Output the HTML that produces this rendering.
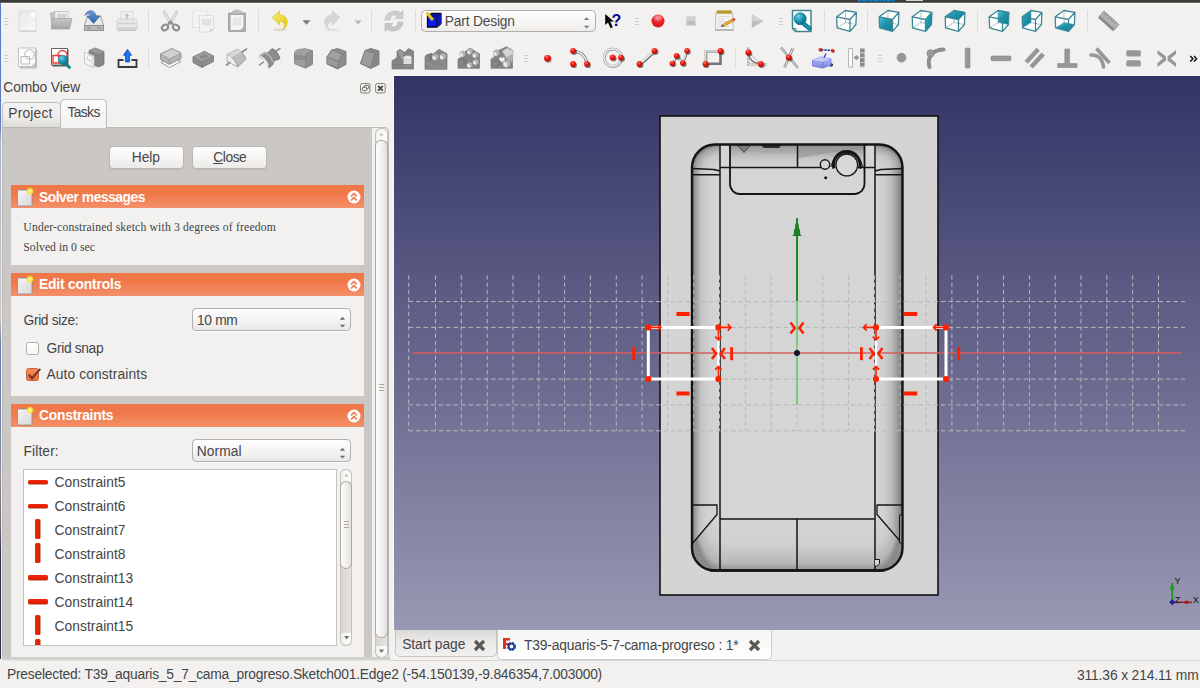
<!DOCTYPE html>
<html lang="en">
<head>
<meta charset="utf-8">
<title>FreeCAD - Part Design</title>
<style>
*{box-sizing:border-box;margin:0;padding:0}
html,body{width:1200px;height:688px;overflow:hidden}
body{background:#f2f1f0;font-family:"Liberation Sans","DejaVu Sans",sans-serif;font-size:13.5px;color:#454545;position:relative}
.abs{position:absolute}
#topstrip{left:0;top:0;width:1200px;height:3px;background:linear-gradient(#3b3a36 0,#403f3a 70%,#8b8a86 100%)}
#leftedge{left:0;top:3px;width:1px;height:656px;background:linear-gradient(#5c7cc0 0,#5c7cc0 19%,#aab4c8 21%,#c4c4c8 48%,#6a7aa8 52%,#7a84a8 68%,#8a8a96 72%,#6a6a78 80%,#2c2e48 84%,#2c2e48 100%)}
#toolbar{left:1px;top:3px;width:1199px;height:74px;background:#f2f1f0;border-top:1px solid #fbfbfa}
.combo{position:absolute;border:1px solid #b5b0ab;border-radius:4px;background:linear-gradient(#fefefe,#f3f2f1 60%,#e9e8e6);box-shadow:0 1px 0 rgba(255,255,255,.8);white-space:nowrap}
.combo .arr{position:absolute;right:4.3px;top:7.2px;width:7px;height:12px}
.t{position:absolute;white-space:nowrap;z-index:2}
</style>
</head>
<body>
<div id="topstrip" class="abs"></div>
<div id="leftedge" class="abs"></div>
<div id="toolbar" class="abs"></div>
<svg class="abs" style="left:0;top:0" width="1200" height="77" viewBox="0 0 1200 77">
<defs>
<linearGradient id="gDoc" x1="0" y1="0" x2="1" y2="1"><stop offset="0" stop-color="#e6e6e6"/><stop offset="1" stop-color="#fafafa"/></linearGradient>
<linearGradient id="gGrey" x1="0" y1="0" x2="0" y2="1"><stop offset="0" stop-color="#c9c9c9"/><stop offset="1" stop-color="#a4a4a4"/></linearGradient>
<linearGradient id="gGreyD" x1="0" y1="0" x2="0" y2="1"><stop offset="0" stop-color="#a8a8a8"/><stop offset="1" stop-color="#7c7c7c"/></linearGradient>
<linearGradient id="gGreyH" x1="0" y1="0" x2="1" y2="0"><stop offset="0" stop-color="#b8b8b8"/><stop offset="1" stop-color="#7e7e7e"/></linearGradient>
<linearGradient id="gBlue" x1="0" y1="0" x2="0" y2="1"><stop offset="0" stop-color="#6c9bd6"/><stop offset="1" stop-color="#2d62ad"/></linearGradient>
<linearGradient id="gYel" x1="0" y1="0" x2="1" y2="1"><stop offset="0" stop-color="#f7ec7a"/><stop offset="1" stop-color="#e3c800"/></linearGradient>
<linearGradient id="gTeal" x1="0" y1="0" x2="1" y2="1"><stop offset="0" stop-color="#5cc3e6"/><stop offset=".45" stop-color="#1a93ad"/><stop offset="1" stop-color="#0d7f98"/></linearGradient>
<radialGradient id="gTealR" cx=".35" cy=".3" r=".7"><stop offset="0" stop-color="#6fd0ee"/><stop offset=".6" stop-color="#1a93ad"/><stop offset="1" stop-color="#0c6f86"/></radialGradient>
<radialGradient id="gRed" cx=".4" cy=".3" r=".7"><stop offset="0" stop-color="#ff7a6a"/><stop offset=".45" stop-color="#ee1c14"/><stop offset="1" stop-color="#b30800"/></radialGradient>
<radialGradient id="gRec" cx=".5" cy=".25" r=".8"><stop offset="0" stop-color="#f37a80"/><stop offset=".5" stop-color="#e6212a"/><stop offset="1" stop-color="#d9141c"/></radialGradient>
<linearGradient id="gCombo" x1="0" y1="0" x2="0" y2="1"><stop offset="0" stop-color="#ffffff"/><stop offset=".6" stop-color="#f6f5f4"/><stop offset="1" stop-color="#ecebe9"/></linearGradient>
<linearGradient id="gBlk" x1="0" y1="0" x2="1" y2="1"><stop offset="0" stop-color="#b4b4b4"/><stop offset="1" stop-color="#6c6c6c"/></linearGradient>
<linearGradient id="gBlkT" x1="0" y1="0" x2="0" y2="1"><stop offset="0" stop-color="#c4c4c4"/><stop offset="1" stop-color="#a2a2a2"/></linearGradient>
<linearGradient id="gLav" x1="0" y1="0" x2="0" y2="1"><stop offset="0" stop-color="#b9c2f4"/><stop offset="1" stop-color="#7d86e0"/></linearGradient>
<g id="rb"><circle r="2.900" fill="#333" opacity=".6" cx="1.100" cy="1.200"/><circle r="2.900" fill="url(#gRed)"/></g>
</defs>
<path d="M4.5 18.5h4M4.5 21.5h4M4.5 24.5h4" stroke="#cfccc9" stroke-width="1" fill="none"/>
<path d="M4.5 55.5h4M4.5 58.5h4M4.5 61.5h4" stroke="#cfccc9" stroke-width="1" fill="none"/>
<path d="M635 18.5h4M635 21.5h4M635 24.5h4" stroke="#cfccc9" stroke-width="1" fill="none"/>
<path d="M779 18.5h4M779 21.5h4M779 24.5h4" stroke="#cfccc9" stroke-width="1" fill="none"/>
<path d="M524 55.5h4M524 58.5h4M524 61.5h4" stroke="#cfccc9" stroke-width="1" fill="none"/>
<path d="M878 55.5h4M878 58.5h4M878 61.5h4" stroke="#cfccc9" stroke-width="1" fill="none"/>
<path d="M148.5 10v22" stroke="#dedbd8" stroke-width="1" fill="none"/>
<path d="M258.5 10v22" stroke="#dedbd8" stroke-width="1" fill="none"/>
<path d="M371.5 10v22" stroke="#dedbd8" stroke-width="1" fill="none"/>
<path d="M415.5 10v22" stroke="#dedbd8" stroke-width="1" fill="none"/>
<path d="M824.5 10v22" stroke="#dedbd8" stroke-width="1" fill="none"/>
<path d="M867.5 10v22" stroke="#dedbd8" stroke-width="1" fill="none"/>
<path d="M977.5 10v22" stroke="#dedbd8" stroke-width="1" fill="none"/>
<path d="M1087.5 10v22" stroke="#dedbd8" stroke-width="1" fill="none"/>
<path d="M148.5 47v22" stroke="#dedbd8" stroke-width="1" fill="none"/>
<path d="M735.5 47v22" stroke="#dedbd8" stroke-width="1" fill="none"/>
<g transform="translate(27.5 21)"><path d="M-8.500 -10h17v19.500h-17z" fill="url(#gDoc)" stroke="#dedede" stroke-width="1"/><path d="M-8.500 10.300h17" stroke="#d2d2d2" stroke-width="1.200"/><circle cx="5.500" cy="-6" r="2.600" fill="#fff" opacity=".9"/></g>
<g transform="translate(61 21)"><path d="M-10.500 -8h2.500l1 -1.500h13.500v17h-15.500z" fill="#c3c3c3" stroke="#b0b0b0" stroke-width=".8"/><path d="M-6 -9.300h13.500v8h-13.500z" fill="#f3f3f3" stroke="#c6c6c6" stroke-width=".7"/><path d="M-4 -7.300h10l-.5 5h-9.500z" fill="#d5d5d5"/><path d="M-8.500 -2.500h19.500l-2.500 10.500h-18z" fill="url(#gGrey)" stroke="#a3a3a3" stroke-width=".8"/></g>
<g transform="translate(94 21)"><path d="M-9.500 4l3 -9h13l3 9v5.500h-19z" fill="#e9e9e9" stroke="#9c9c9c" stroke-width="1"/><path d="M-9.500 4.500h19v5h-19z" fill="#b9b9b9" stroke="#8f8f8f" stroke-width="1"/><path d="M-7 7h4M3 7h4.500" stroke="#8a8a8a" stroke-width="1"/><path d="M-9 -5.500c1.500 -6 9 -6.500 10.500 -1l.5 1.500h4l-6.500 7.500 -6.500 -7.500h4c-.8 -2.500 -4 -3 -6 -.5z" fill="url(#gBlue)" stroke="#2b5a9c" stroke-width=".6"/></g>
<g transform="translate(127 21)"><path d="M-6 -9.500h12v8h-12z" fill="#f0f0f0" stroke="#d4d4d4" stroke-width=".8"/><path d="M0 -8l2.500 3h-1.500v2.500h-2v-2.500h-1.500z" fill="#c2c2c2"/><path d="M-8 -2h16c1 0 2 1 2 2v7.500c0 .8 -.6 1.500 -1.500 1.500h-17c-.9 0 -1.500 -.7 -1.500 -1.500v-7.500c0 -1 1 -2 2 -2z" fill="#e7e7e7" stroke="#cfcfcf" stroke-width=".9"/><path d="M-8.500 2.500h17M-9.500 7h19" stroke="#d0d0d0" stroke-width="1.400" fill="none"/><path d="M-9 9.300h18" stroke="#bdbdbd" stroke-width="1.300"/></g>
<g transform="translate(170.5 21)"><path d="M-6 -10.500l7.500 13 -1.800 1 -7 -12.500zM6 -10.500l-7.500 13 1.800 1 7 -12.500z" fill="#f1f1f1" stroke="#b9b9b9" stroke-width=".9"/><ellipse cx="-5.500" cy="6.500" rx="3.300" ry="2.600" transform="rotate(-35 -5.500 6.500)" fill="none" stroke="#8c8c8c" stroke-width="2"/><ellipse cx="5.500" cy="6.500" rx="3.300" ry="2.600" transform="rotate(35 5.500 6.500)" fill="none" stroke="#8c8c8c" stroke-width="2"/><path d="M-2.500 3.500l2.500 -3 2.500 3" fill="none" stroke="#8c8c8c" stroke-width="2"/></g>
<g transform="translate(204 21)"><path d="M-11 -10h14v16.500h-14z" fill="#f4f4f4" stroke="#e0e0e0" stroke-width=".9"/><path d="M-8 -5h8M-8 -2.500h8M-8 0h8" stroke="#e3e3e3" stroke-width=".8"/><path d="M-4.500 -5.500h14v13.500l-3.500 3h-10.500z" fill="#f3f3f3" stroke="#dadada" stroke-width=".9"/><path d="M-2 -2h9v6.500h-9z" fill="#e2e2e2"/><path d="M9.500 8l-3.500 3v-3z" fill="#cfcfcf"/></g>
<g transform="translate(237 21)"><path d="M-8.500 -8h17v18.500h-17z" fill="#a9a9a9" stroke="#a0a0a0" stroke-width=".8"/><path d="M-6.500 -6h13v12l-3 3h-10z" fill="#f4f4f4"/><path d="M-4 -3.500h8.500v8h-8.500z" fill="#e6e6e6"/><path d="M-4.500 -8.500c0 -1 .5 -1.500 1.500 -1.500h.5c.3 -.8 1 -1 2.500 -1s2.200 .2 2.500 1h.5c1 0 1.500 .5 1.500 1.500v1.500h-9z" fill="#bdbdbd" stroke="#a6a6a6" stroke-width=".6"/><path d="M6.500 6v3h-3z" fill="#b5b5b5"/></g>
<g transform="translate(280 21.3)"><g transform="scale(.9)"><ellipse cx="0" cy="9.500" rx="8" ry="1.500" fill="#d8d6d3" opacity=".9"/><path d="M-8.500 -4.500l8 -7v4.500c6 0 9 4 8.500 9 -.4 3.500 -2.500 6 -5.500 7.500 2 -2 2.800 -4 2.200 -6 -.7 -2.300 -2.700 -3.200 -5.200 -3.200v4z" fill="url(#gYel)" stroke="#d8c21a" stroke-width=".7" stroke-linejoin="round"/></g></g>
<path d="M302.500 20.300h8l-4 4.500z" fill="#7a7a7a"/>
<g transform="translate(332 21.3)"><g transform="scale(.9)"><ellipse cx="0" cy="9.500" rx="8" ry="1.500" fill="#e2e0de" opacity=".9"/><path d="M8.500 -4.500l-8 -7v4.500c-6 0 -9 4 -8.500 9 .4 3.500 2.500 6 5.500 7.500 -2 -2 -2.800 -4 -2.200 -6 .7 -2.300 2.700 -3.200 5.200 -3.200v4z" fill="#d6d6d6" stroke="#cbcbcb" stroke-width=".7" stroke-linejoin="round"/></g></g>
<path d="M354.500 20.500h7l-3.500 4z" fill="#b9b6b3"/>
<g transform="translate(394 21)"><path d="M-9 -1c.5 -6 5 -9 10 -9 2.500 0 4.500 .8 6 2l2 -2.500v8h-8l2.500 -2.500c-.8 -.7 -1.700 -1 -3 -1 -2.500 0 -4 1.500 -4.500 5z" fill="#cecece" stroke="#bebebe" stroke-width=".7"/><path d="M9 1c-.5 6 -5 9 -10 9 -2.500 0 -4.500 -.8 -6 -2l-2 2.500v-8h8l-2.500 2.500c.8 .7 1.700 1 3 1 2.500 0 4 -1.500 4.500 -5z" fill="#c6c6c6" stroke="#b8b8b8" stroke-width=".7"/></g>
<rect x="421.500" y="10.500" width="174" height="21" rx="4" fill="url(#gCombo)" stroke="#b3aea9" stroke-width="1"/>
<path d="M583.900 20l2.700 -2.700 2.700 2.700zM583.900 25.700l2.700 2.800 2.700 -2.800z" fill="#767676"/>
<g transform="translate(434 20.5)"><path d="M-6.500 -4.500l4 -2.500h9.500v10l-4 3.500h-9.500z" fill="#0a1cf0" stroke="#050514" stroke-width="1.300" stroke-linejoin="round"/><path d="M-6.500 -4.500h9.500v11M3 -4.500l4 -2.500" fill="none" stroke="#050514" stroke-width="1.100"/><path d="M3 -4.500l4 -2.500v10l-4 3.500z" fill="#0c14b8"/><path d="M-6.500 -7l4.500 5.500" stroke="#e8c41a" stroke-width="3.200" stroke-linecap="round"/></g>
<text x="444.700" y="25.700" font-family="'Liberation Sans',sans-serif" font-size="13.800" fill="#4a4a4a" textLength="70.300" lengthAdjust="spacing">Part Design</text>
<g transform="translate(612 21)"><path d="M-6.800 -7v11l2.800 -2.600 2.600 5.800 2.200 -1 -2.600 -5.600h3.700z" fill="#050505"/><text x="-.4" y="4.500" font-family="'Liberation Sans',sans-serif" font-weight="bold" font-size="16" fill="#06068e">?</text></g>
<g transform="translate(658 21)"><circle r="6.500" fill="url(#gRec)"/><ellipse cx="0" cy="-3" rx="4.500" ry="2.500" fill="#fff" opacity=".22"/></g>
<g transform="translate(691 21)"><rect x="-4.700" y="-4.700" width="9.400" height="9.400" fill="#d0d0d0"/><rect x="-4.700" y="0" width="9.400" height="4.700" fill="#bebebe"/><rect x="-4.700" y="-4.700" width="9.400" height="9.400" fill="none" stroke="#dcdcdc" stroke-width=".8"/></g>
<g transform="translate(724 21)"><path d="M-8 -8h16.500l.8 16.500h-18z" fill="#f4f4f2" stroke="#b9b9b7" stroke-width=".9"/><path d="M-9 8.500h18.500v1.300h-18.500z" fill="#a9a9a7"/><path d="M-7.500 -10.500h15.500v3h-15.500z" fill="#c8ac2c"/><path d="M-6 -10.500v3M-4 -10.500v3M-2 -10.500v3M0 -10.500v3M2 -10.500v3M4 -10.500v3M6 -10.500v3" stroke="#8e7a18" stroke-width=".7"/><path d="M-6 -4.500h12M-6 -2h6M-6 .5h12M-6 3h4M-6 5.500h11" stroke="#d0d0ce" stroke-width=".8"/><path d="M-3 5.500l1.500 -2 9.500 -5.500 1.500 2.200 -9.700 5.300z" fill="#e8a93a" stroke="#b57e1e" stroke-width=".6"/><path d="M-3 5.500l1.500 -2 1 1.700z" fill="#3c3c3c"/><path d="M8 -2l1.600 -.9c.5 -.3 1.100 -.1 1.400 .4l.3 .6c.3 .5 .1 1.100 -.4 1.400l-1.400 .8z" fill="#e5443c"/></g>
<g transform="translate(757 21)"><path d="M-5 -6.500l11 6.500 -11 6.500z" fill="#d4d4d4" stroke="#c6c6c6" stroke-width=".6"/><path d="M-5 0h11l-11 6.500z" fill="#bebebe"/></g>
<g transform="translate(802 21)"><path d="M-9.500 -10.500h18.500v21h-15.500l-3 -3z" fill="#fff" stroke="#3f8291" stroke-width="1.500" stroke-linejoin="round"/><path d="M-9 7.500h3v3" fill="none" stroke="#3f8291" stroke-width="1"/><path d="M2 3l5.500 4.500" stroke="#0e7188" stroke-width="4.200" stroke-linecap="round"/><path d="M2 3l5.500 4.500" stroke="#1f9cb8" stroke-width="2" stroke-linecap="round"/><circle cx="-1.800" cy="-2.200" r="6" fill="url(#gTealR)" stroke="#0e7188" stroke-width=".8"/></g>
<g transform="translate(846.5 21)"><path d="M-9.8 -4.2L-1 -10.5L9.9 -8.7L9.4 3.5L3.5 10.4L-9.4 6.8z" fill="#fff"/><path d="M-1 -10.5L-1 1.5M-1 1.5L-9.4 6.8M-1 1.5L9.4 3.5" fill="none" stroke="#5f98a4" stroke-width=".8" stroke-dasharray="1.600 .8"/><path d="M-9.8 -4.2L-1 -10.5L9.9 -8.7L9.4 3.5L3.5 10.4L-9.4 6.8zM-9.8 -4.2L3.5 -1.5L9.9 -8.7M3.5 -1.5L3.5 10.4" fill="none" stroke="#3c8696" stroke-width="1.300" stroke-linejoin="round"/></g>
<g transform="translate(889 21)"><path d="M-9.8 -4.2L-1 -10.5L9.9 -8.7L9.4 3.5L3.5 10.4L-9.4 6.8z" fill="#fff"/><path d="M-9.8 -4.2L3.5 -1.5L3.5 10.4L-9.4 6.8z" fill="url(#gTeal)"/><path d="M-1 -10.5L-1 1.5M-1 1.5L-9.4 6.8M-1 1.5L9.4 3.5" fill="none" stroke="#5f98a4" stroke-width=".8" stroke-dasharray="1.600 .8"/><path d="M-9.8 -4.2L-1 -10.5L9.9 -8.7L9.4 3.5L3.5 10.4L-9.4 6.8zM-9.8 -4.2L3.5 -1.5L9.9 -8.7M3.5 -1.5L3.5 10.4" fill="none" stroke="#3c8696" stroke-width="1.300" stroke-linejoin="round"/></g>
<g transform="translate(922 21)"><path d="M-9.8 -4.2L-1 -10.5L9.9 -8.7L9.4 3.5L3.5 10.4L-9.4 6.8z" fill="#fff"/><path d="M3.5 -1.5L9.9 -8.7L9.4 3.5L3.5 10.4z" fill="url(#gTeal)"/><path d="M-1 -10.5L-1 1.5M-1 1.5L-9.4 6.8M-1 1.5L9.4 3.5" fill="none" stroke="#5f98a4" stroke-width=".8" stroke-dasharray="1.600 .8"/><path d="M-9.8 -4.2L-1 -10.5L9.9 -8.7L9.4 3.5L3.5 10.4L-9.4 6.8zM-9.8 -4.2L3.5 -1.5L9.9 -8.7M3.5 -1.5L3.5 10.4" fill="none" stroke="#3c8696" stroke-width="1.300" stroke-linejoin="round"/></g>
<g transform="translate(955 21)"><path d="M-9.8 -4.2L-1 -10.5L9.9 -8.7L9.4 3.5L3.5 10.4L-9.4 6.8z" fill="#fff"/><path d="M-9.8 -4.2L-1 -10.5L9.9 -8.7L3.5 -1.5z" fill="url(#gTeal)"/><path d="M-1 -10.5L-1 1.5M-1 1.5L-9.4 6.8M-1 1.5L9.4 3.5" fill="none" stroke="#5f98a4" stroke-width=".8" stroke-dasharray="1.600 .8"/><path d="M-9.8 -4.2L-1 -10.5L9.9 -8.7L9.4 3.5L3.5 10.4L-9.4 6.8zM-9.8 -4.2L3.5 -1.5L9.9 -8.7M3.5 -1.5L3.5 10.4" fill="none" stroke="#3c8696" stroke-width="1.300" stroke-linejoin="round"/></g>
<g transform="translate(999 21)"><path d="M-9.8 -4.2L-1 -10.5L9.9 -8.7L9.4 3.5L3.5 10.4L-9.4 6.8z" fill="#fff"/><path d="M-1 -10.5L9.9 -8.7L9.4 3.5L-1 1.5z" fill="url(#gTeal)"/><path d="M-1 -10.5L-1 1.5M-1 1.5L-9.4 6.8M-1 1.5L9.4 3.5" fill="none" stroke="#5f98a4" stroke-width=".8" stroke-dasharray="1.600 .8"/><path d="M-9.8 -4.2L-1 -10.5L9.9 -8.7L9.4 3.5L3.5 10.4L-9.4 6.8zM-9.8 -4.2L3.5 -1.5L9.9 -8.7M3.5 -1.5L3.5 10.4" fill="none" stroke="#3c8696" stroke-width="1.300" stroke-linejoin="round"/></g>
<g transform="translate(1032 21)"><path d="M-9.8 -4.2L-1 -10.5L9.9 -8.7L9.4 3.5L3.5 10.4L-9.4 6.8z" fill="#fff"/><path d="M-9.8 -4.2L-1 -10.5L-1 1.5L-9.4 6.8z" fill="url(#gTeal)"/><path d="M-1 -10.5L-1 1.5M-1 1.5L-9.4 6.8M-1 1.5L9.4 3.5" fill="none" stroke="#5f98a4" stroke-width=".8" stroke-dasharray="1.600 .8"/><path d="M-9.8 -4.2L-1 -10.5L9.9 -8.7L9.4 3.5L3.5 10.4L-9.4 6.8zM-9.8 -4.2L3.5 -1.5L9.9 -8.7M3.5 -1.5L3.5 10.4" fill="none" stroke="#3c8696" stroke-width="1.300" stroke-linejoin="round"/></g>
<g transform="translate(1065 21)"><path d="M-9.8 -4.2L-1 -10.5L9.9 -8.7L9.4 3.5L3.5 10.4L-9.4 6.8z" fill="#fff"/><path d="M-9.4 6.8L3.5 10.4L9.4 3.5L-1 1.5z" fill="url(#gTeal)"/><path d="M-1 -10.5L-1 1.5M-1 1.5L-9.4 6.8M-1 1.5L9.4 3.5" fill="none" stroke="#5f98a4" stroke-width=".8" stroke-dasharray="1.600 .8"/><path d="M-9.8 -4.2L-1 -10.5L9.9 -8.7L9.4 3.5L3.5 10.4L-9.4 6.8zM-9.8 -4.2L3.5 -1.5L9.9 -8.7M3.5 -1.5L3.5 10.4" fill="none" stroke="#3c8696" stroke-width="1.300" stroke-linejoin="round"/></g>
<g transform="translate(1109.3 21.3)"><g transform="rotate(42) scale(.9)"><path d="M-12 -4.500h22.500v7h-22.500z" fill="#b3b3b3" stroke="#8e8e8e" stroke-width=".8"/><path d="M-12 2.500h22.500v3h-22.500z" fill="#8a8a8a"/><path d="M-9 -4.500v3.500M-6 -4.500v2.500M-3 -4.500v3.500M0 -4.500v2.500M3 -4.500v3.500M6 -4.500v2.500" stroke="#777" stroke-width=".9"/></g></g>
<path d="M858 .7h37" stroke="#1183c4" stroke-width="1.500" stroke-dasharray="3 .8 5 .7 2 .6"/><rect x="906" y="0" width="17" height="1" fill="#d9d5cd"/>
<g transform="translate(27.5 58)"><path d="M-7.500 -8.500h17v17.500l-1.500 1.500h-15.500z" fill="#bdbdbd"/><path d="M-9 -10h17v16l-2.500 2.500h-14.500z" fill="#fbfbfb" stroke="#bcbcbc" stroke-width=".9"/><circle cx="2" cy="-3.500" r="4.800" fill="none" stroke="#b3b3b3" stroke-width="1"/><path d="M-6.500 -1.500h8.500v7.500h-8.500z" fill="none" stroke="#b9b9b9" stroke-width="1"/><path d="M5.500 8.500v-2.500h2.500" fill="none" stroke="#bcbcbc" stroke-width=".8"/></g>
<g transform="translate(60 58)"><path d="M-7.500 -8.500h16v17h-16z" fill="#5a5a5a"/><path d="M-8.500 -9.500h16v16.500h-16z" fill="#fdfdfd" stroke="#555" stroke-width=".9"/><circle cx="2.500" cy="-3" r="4.500" fill="none" stroke="#ee3a2c" stroke-width="1.300"/><path d="M-7 -2.500h8v7.500h-8z" fill="none" stroke="#ee3a2c" stroke-width="1.300"/><path d="M6 6l3.500 3.500" stroke="#0f7d94" stroke-width="2.800" stroke-linecap="round"/><circle cx="3" cy="2" r="4.800" fill="url(#gTealR)" stroke="#0f7d94" stroke-width=".5"/></g>
<g transform="translate(94 58)"><path d="M-5 -7.500l6 -2.500 9 3.500v13l-5.500 2.500 -9.500 -3.500z" fill="#858585" stroke="#6e6e6e" stroke-width=".7"/><path d="M-5 -7.500l6 -2.500 9 3.500 -5.500 2.500z" fill="#9a9a9a"/><path d="M-9.500 -6l9.500 4v12l-9.500 -4.500z" fill="#f7f7f7" stroke="#c2c2c2" stroke-width=".9"/><circle cx="-4" cy="0" r="2.800" fill="none" stroke="#c9c9c9" stroke-width=".9"/><path d="M-7.500 1.500l5.500 2.500v4" fill="none" stroke="#cdcdcd" stroke-width=".9"/></g>
<g transform="translate(127.5 58)"><path d="M-4 2h-5v7h18v-7h-5" fill="none" stroke="#3a3a3a" stroke-width="1.800"/><path d="M0 -8.700l4.200 6h-2.100v6.700h-4.200v-6.700h-2.100z" fill="#1862e8" stroke="#0a3fb0" stroke-width=".6"/><path d="M0 -7.500l2.400 4h-1.600v5.500h-1.600z" fill="#4a95ff" opacity=".6"/></g>
<g transform="translate(170 58)"><path d="M-9 4.500l11 -5.500 9 4.500 -11.500 6z" fill="#fcfcfc" stroke="#8a8a8a" stroke-width=".9"/><path d="M-9.500 -4l11.500 -5.500 9 4.500v5.500l-11.500 6 -9 -5z" fill="#b3b3b3" stroke="#888" stroke-width=".8" stroke-linejoin="round"/><path d="M-9.500 -4l11.500 -5.500 9 4.500 -11.500 6z" fill="#d0d0d0" stroke="#909090" stroke-width=".7"/><path d="M-.5 1v5.500" stroke="#8a8a8a" stroke-width=".8"/></g>
<g transform="translate(203 58.5)"><path d="M-10 -1.500l11.500 -5.500 9 4.500v5.500l-11.500 6 -9 -5z" fill="#8d8d8d" stroke="#727272" stroke-width=".8" stroke-linejoin="round"/><path d="M-10 -1.500l11.500 -5.500 9 4.500 -11.500 6z" fill="#a2a2a2" stroke="#787878" stroke-width=".7"/><path d="M-4.500 -1.500l6 -3 4.500 2.300 -6 3z" fill="#8a8a8a"/><path d="M-1 3.500v5.500" stroke="#6f6f6f" stroke-width=".8"/></g>
<g transform="translate(236.5 58)"><path d="M-10 7l4 -3M5 -5.500l5 -3.500" stroke="#8b8b8b" stroke-width="1.700" stroke-linecap="round"/><path d="M-9.500 -3.500l10.500 -5.500c3.500 1.500 7 6 8.500 10l-8.500 8c-1 -4.500 -5 -10.500 -10.500 -12.500z" fill="#bdbdbd" stroke="#8e8e8e" stroke-width=".8" stroke-linejoin="round"/><path d="M-9.500 -3.500c5.500 2 9.500 8 10.500 12.500l-5 -2.500c-2 -2.500 -4 -3 -5.500 -2.500z" fill="#ececec" stroke="#9a9a9a" stroke-width=".7"/><path d="M-9.500 -3.500l10.500 -5.500c1.500 .8 3 1.800 4 3l-10 5.500c-1.500 -1.500 -3 -2.500 -4.500 -3z" fill="#d6d6d6"/></g>
<g transform="translate(269.5 58)"><path d="M-10 7l4 -3M6.500 -7l4 -2.500" stroke="#8b8b8b" stroke-width="1.500" stroke-linecap="round"/><path d="M-9.500 -2.500l5 -3c2 1 4 0 5 -2l2 -2c4 1.500 7 6 8 10l-3 1.500c-3 0 -4 2 -4 4.500l-4 3.500c-1 -4.500 -4.500 -9 -9 -10.500z" fill="#8c8c8c" stroke="#6e6e6e" stroke-width=".8" stroke-linejoin="round"/><path d="M-9.500 -2.500c4.500 1.500 8 6 9 10.500l-2.500 -1c-1.500 -3.500 -4 -6.500 -6.500 -7.500z" fill="#e6e6e6"/><path d="M-9.500 -2.500l5 -3c3 1.500 6.500 5 8 9.500" fill="none" stroke="#b5b5b5" stroke-width="1.500"/></g>
<g transform="translate(303.5 58.5)"><path d="M-9 -4.500c0 -2.500 1.500 -4 4 -4.500l7 -.8 7 2v13.500l-7 4 -11 -4.500z" fill="#8f8f8f" stroke="#7a7a7a" stroke-width=".8" stroke-linejoin="round"/><path d="M-9 -4.500c0 -2.500 1.500 -4 4 -4.500l7 -.8 7 2c-3 .3 -5.500 2.500 -7 5.300z" fill="#a1a1a1"/><path d="M-9 1h11v-3.500c1.500 -2.800 4 -5 7 -5.300" fill="none" stroke="#7a7a7a" stroke-width=".8"/><path d="M2 1v8.500" stroke="#7a7a7a" stroke-width=".8"/><path d="M-9 1h11v8.500l-11 -4.500z" fill="#a3a3a3" opacity=".7"/></g>
<g transform="translate(336.5 58.5)"><path d="M-9.500 -1.500l4.500 -7 6 -1.500 8.500 3v13l-8.500 4.500 -10.500 -5z" fill="#8d8d8d" stroke="#777" stroke-width=".8" stroke-linejoin="round"/><path d="M-9.500 -1.500l4.500 -7 10.500 4 -4 7.500z" fill="#a0a0a0" stroke="#7a7a7a" stroke-width=".7"/><path d="M-9.500 -1.500l11 4.500v6.500l-11 -4z" fill="#9a9a9a" stroke="#7a7a7a" stroke-width=".7"/></g>
<g transform="translate(369.5 58.5)"><path d="M-9 5l4.500 -13 6 -2 8 2.500v13.500l-8.500 4z" fill="#878787" stroke="#747474" stroke-width=".8" stroke-linejoin="round"/><path d="M-9 5l4.500 -13 9.500 3 -4 14z" fill="#9c9c9c" stroke="#7a7a7a" stroke-width=".7"/></g>
<g transform="translate(402.5 59)"><path d="M-10.500 2l5 -3.500v-6l3 -2 4.500 3 4 -4 5 2.500v18h-21.500z" fill="#858585" stroke="#757575" stroke-width=".7"/><path d="M-5.500 -7.500l3 -2 4 3v9l-3.500 -2.500z" fill="#9a9a9a" stroke="#6e6e6e" stroke-width=".7"/><path d="M1 -1.500h8v6.500h-8z" fill="#dedede"/><ellipse cx="5" cy="-1.500" rx="4" ry="1.800" fill="#f1f1f1" stroke="#bdbdbd" stroke-width=".6"/><path d="M1 5c1 1.500 7 1.500 8 0" fill="none" stroke="#aaa" stroke-width=".8"/><path d="M-10.500 5.500h21" stroke="#6f6f6f" stroke-width=".8" opacity=".6"/></g>
<g transform="translate(436 58.3)"><path d="M-11 -1.500l6 -3.500 2 1 6 -5 8 4.500v15.500h-22z" fill="#888" stroke="#777" stroke-width=".7"/><path d="M-11 3.500l9 5.500h13" fill="none" stroke="#9c9c9c" stroke-width=".8" opacity=".7"/><path d="M-11 -1.500l6 -3.500 2 1v5.500l-4 2z" fill="#7b7b7b"/><g transform="translate(-0.5 -1.5) scale(1.05)"><path d="M-3 -1.500l3 -1.500 3 1.500v3.500l-3 1.500 -3 -1.500z" fill="#b5b5b5" stroke="#7a7a7a" stroke-width=".6"/><path d="M-3 -1.500l3 1.500v3.500l-3 -1.500z" fill="#ebebeb"/><path d="M-3 -1.500l3 -1.500 3 1.500 -3 1.500z" fill="#b5b5b5"/></g><g transform="translate(7 -2) scale(1.05)"><path d="M-3 -1.500l3 -1.500 3 1.500v3.500l-3 1.500 -3 -1.500z" fill="#b5b5b5" stroke="#7a7a7a" stroke-width=".6"/><path d="M-3 -1.500l3 1.500v3.500l-3 -1.500z" fill="#ebebeb"/><path d="M-3 -1.500l3 -1.500 3 1.500 -3 1.500z" fill="#b5b5b5"/></g><g transform="translate(-7.5 -1.5) scale(0.9)"><path d="M-3 -1.500l3 -1.500 3 1.500v3.500l-3 1.500 -3 -1.500z" fill="#7c7c7c" stroke="#6a6a6a" stroke-width=".6"/><path d="M-3 -1.500l3 1.500v3.500l-3 -1.500z" fill="#8e8e8e"/><path d="M-3 -1.500l3 -1.500 3 1.500 -3 1.500z" fill="#7c7c7c"/></g></g>
<g transform="translate(469 58.3)"><path d="M-11 1l5 -3.500 2 -4 5 -3.500 9.500 5.500v14.500h-21.500z" fill="#858585" stroke="#777" stroke-width=".7"/><g transform="translate(-6 -4.5) scale(0.95)"><path d="M-3 -1.500l3 -1.500 3 1.500v3.500l-3 1.500 -3 -1.500z" fill="#b5b5b5" stroke="#7a7a7a" stroke-width=".6"/><path d="M-3 -1.500l3 1.500v3.500l-3 -1.500z" fill="#ebebeb"/><path d="M-3 -1.500l3 -1.500 3 1.500 -3 1.500z" fill="#b5b5b5"/></g><g transform="translate(1 -7) scale(0.95)"><path d="M-3 -1.500l3 -1.500 3 1.500v3.500l-3 1.500 -3 -1.500z" fill="#b5b5b5" stroke="#7a7a7a" stroke-width=".6"/><path d="M-3 -1.500l3 1.500v3.500l-3 -1.500z" fill="#ebebeb"/><path d="M-3 -1.500l3 -1.500 3 1.500 -3 1.500z" fill="#b5b5b5"/></g><g transform="translate(6.5 -3.5) scale(0.95)"><path d="M-3 -1.500l3 -1.500 3 1.500v3.500l-3 1.500 -3 -1.500z" fill="#b5b5b5" stroke="#7a7a7a" stroke-width=".6"/><path d="M-3 -1.500l3 1.500v3.500l-3 -1.500z" fill="#ebebeb"/><path d="M-3 -1.500l3 -1.500 3 1.500 -3 1.500z" fill="#b5b5b5"/></g><g transform="translate(7 3.5) scale(0.95)"><path d="M-3 -1.500l3 -1.500 3 1.500v3.500l-3 1.500 -3 -1.500z" fill="#b5b5b5" stroke="#7a7a7a" stroke-width=".6"/><path d="M-3 -1.500l3 1.500v3.500l-3 -1.500z" fill="#ebebeb"/><path d="M-3 -1.500l3 -1.500 3 1.500 -3 1.500z" fill="#b5b5b5"/></g><g transform="translate(1 6.5) scale(0.95)"><path d="M-3 -1.500l3 -1.500 3 1.500v3.500l-3 1.500 -3 -1.500z" fill="#b5b5b5" stroke="#7a7a7a" stroke-width=".6"/><path d="M-3 -1.500l3 1.500v3.500l-3 -1.500z" fill="#ebebeb"/><path d="M-3 -1.500l3 -1.500 3 1.500 -3 1.500z" fill="#b5b5b5"/></g><g transform="translate(-6 3) scale(0.95)"><path d="M-3 -1.500l3 -1.500 3 1.500v3.500l-3 1.500 -3 -1.500z" fill="#7c7c7c" stroke="#6a6a6a" stroke-width=".6"/><path d="M-3 -1.500l3 1.500v3.500l-3 -1.500z" fill="#8e8e8e"/><path d="M-3 -1.500l3 -1.500 3 1.500 -3 1.500z" fill="#7c7c7c"/></g></g>
<g transform="translate(502 58.3)"><path d="M-11 1l4 -3 1 -5 5 -2 5.500 -2.500 6 3.500v18h-21.500z" fill="#868686" stroke="#777" stroke-width=".7"/><path d="M0 -7l5.500 -3.500 5.500 3v6l-5.500 3z" fill="#d6d6d6" stroke="#9a9a9a" stroke-width=".6"/><path d="M5 -1.500l5.500 -3v9l-5 -2z" fill="#b0b0b0"/><g transform="translate(-5.5 -5.5) scale(1)"><path d="M-3 -1.500l3 -1.500 3 1.500v3.500l-3 1.500 -3 -1.500z" fill="#b5b5b5" stroke="#7a7a7a" stroke-width=".6"/><path d="M-3 -1.500l3 1.500v3.500l-3 -1.500z" fill="#ebebeb"/><path d="M-3 -1.500l3 -1.500 3 1.500 -3 1.500z" fill="#b5b5b5"/></g><g transform="translate(5 5) scale(1.25)"><path d="M-3 -1.500l3 -1.500 3 1.500v3.500l-3 1.500 -3 -1.500z" fill="#b5b5b5" stroke="#7a7a7a" stroke-width=".6"/><path d="M-3 -1.500l3 1.500v3.500l-3 -1.500z" fill="#ebebeb"/><path d="M-3 -1.500l3 -1.500 3 1.500 -3 1.500z" fill="#b5b5b5"/></g><g transform="translate(-5 4.5) scale(1)"><path d="M-3 -1.500l3 -1.500 3 1.500v3.500l-3 1.500 -3 -1.500z" fill="#7c7c7c" stroke="#6a6a6a" stroke-width=".6"/><path d="M-3 -1.500l3 1.500v3.500l-3 -1.500z" fill="#8e8e8e"/><path d="M-3 -1.500l3 -1.500 3 1.500 -3 1.500z" fill="#7c7c7c"/></g><path d="M-3 0c1 -1.500 2.500 -1 3 0 .5 -1 2 -1.500 3 0 0 2 -2 3 -3 4 -1 -1 -3 -2 -3 -4z" fill="#f0f0f0"/></g>
<g transform="translate(547.5 58.3)"><circle cx="1" cy="1.200" r="3.400" fill="#6a6a6a" opacity=".45"/><circle r="3.400" fill="url(#gRed)"/></g>
<path d="M574 51.300c7 .5 11.500 5 13 12" fill="none" stroke="#808080" stroke-width="3"/><path d="M574 51.200c7 .5 11.500 5 13 12" fill="none" stroke="#e9e9e9" stroke-width="1.400"/>
<use href="#rb" transform="translate(573 50.8) scale(1)"/><use href="#rb" transform="translate(573 64) scale(1)"/><use href="#rb" transform="translate(587 64) scale(1)"/>
<circle cx="613" cy="57.900" r="8.700" fill="none" stroke="#6a6a6a" stroke-width="2.600" opacity=".75"/><circle cx="612.800" cy="57.600" r="8.700" fill="none" stroke="#b4b4b4" stroke-width="2.600"/><circle cx="612.700" cy="57.500" r="8.700" fill="none" stroke="#f6f6f6" stroke-width="1.200"/>
<use href="#rb" transform="translate(612.6 57.4) scale(1)"/><use href="#rb" transform="translate(621 57.6) scale(1)"/>
<path d="M640 64.500l15 -13.500" stroke="#6e6e6e" stroke-width="3.200"/><path d="M639.600 64l15 -13.500" stroke="#ededed" stroke-width="1.700"/>
<use href="#rb" transform="translate(639.4 64) scale(1)"/><use href="#rb" transform="translate(654.5 50.8) scale(1)"/>
<path d="M672.800 63.600l4.200 -7.600 6.200 7.200 4.200 -12" fill="none" stroke="#7b7b7b" stroke-width="2.400"/><path d="M672.400 63.300l4.200 -7.600 6.200 7.200 4.200 -12" fill="none" stroke="#ededed" stroke-width="1.200"/>
<use href="#rb" transform="translate(672.4 63.4) scale(0.95)"/><use href="#rb" transform="translate(676.6 55.8) scale(0.95)"/><use href="#rb" transform="translate(682.8 63) scale(0.95)"/><use href="#rb" transform="translate(687 50.8) scale(0.95)"/>
<path d="M706 51.300h14.500v12.500h-14.500z" fill="none" stroke="#777" stroke-width="2.600"/><path d="M705.700 64v-13h14.500" fill="none" stroke="#e4e4e4" stroke-width="1.300"/>
<use href="#rb" transform="translate(705.5 64) scale(1)"/><use href="#rb" transform="translate(720.5 51) scale(1)"/>
<path d="M748.300 47.500v17h18.500" fill="none" stroke="#8a8a8a" stroke-width="2.200" stroke-dasharray="2.500 .8"/><path d="M748.300 47.500v17h18.500" fill="none" stroke="#e8e8e8" stroke-width=".8"/><path d="M748.300 52c.5 7 5 11.500 12.500 12" fill="none" stroke="#7c7c7c" stroke-width="1.500"/><path d="M748.300 52l12.400 12" fill="none" stroke="#bdbdbd" stroke-width="1"/>
<use href="#rb" transform="translate(748.3 52.4) scale(1)"/><use href="#rb" transform="translate(760.7 64) scale(1)"/>
<path d="M781 47.500l17 20.500" stroke="#8a8a8a" stroke-width="2.400"/><path d="M781 47.500l17 20.500" stroke="#eee" stroke-width=".9"/><path d="M793 48l-8.500 19.500" stroke="#8a8a8a" stroke-width="2.600"/><path d="M793 48l-8.500 19.500" stroke="#eee" stroke-width="1"/>
<use href="#rb" transform="translate(788.7 57.4) scale(1)"/>
<path d="M830 62.500l3 1.500v2l-3 1z" fill="#3c3c3c"/><path d="M812.500 60.500l8 -3.500 10.500 2v6l-8 3 -10.500 -2z" fill="url(#gLav)" stroke="#6a6ee0" stroke-width=".8" stroke-linejoin="round"/><path d="M812.500 60.500l10.500 1.500 8 -3M823 62v6" fill="none" stroke="#6a6ee0" stroke-width=".7"/><path d="M812.500 60.500l8 -3.500 10.500 2 -8 3z" fill="#c3ccf8"/><path d="M824 57.500l2 -4" stroke="#2f3fb8" stroke-width="1.300"/><path d="M821 49.700l11 .8" stroke="#1b1fa8" stroke-width="1.500" stroke-dasharray="2.300 1"/>
<use href="#rb" transform="translate(820.3 49.6) scale(0.6)"/><use href="#rb" transform="translate(832.5 50.6) scale(0.6)"/>
<path d="M848.700 48.500h3.800v18.500h-3.800z" fill="#fff" stroke="#a9a9a9" stroke-width=".9"/><path d="M862.300 48.500v19" stroke="#8a8a8a" stroke-width="4.600" stroke-dasharray="4 .7"/><path d="M853.500 57.600l3 -2.600 3 2.600 -3 2.600z" fill="#9a9a9a"/>
<circle cx="901.500" cy="57.700" r="4.400" fill="#979797" stroke="#858585" stroke-width=".7"/>
<path d="M929.500 67c-2.500 -9 2 -17 14 -17.500" fill="none" stroke="#8e8e8e" stroke-width="4" stroke-linecap="round"/><circle cx="930.600" cy="53.400" r="3.700" fill="#9c9c9c" stroke="#848484" stroke-width=".7"/>
<rect x="965.200" y="48" width="4.800" height="20" rx="1" fill="#979797" stroke="#878787" stroke-width=".6"/>
<rect x="991" y="56" width="20" height="4.700" rx="1" fill="#979797" stroke="#878787" stroke-width=".6"/>
<path d="M1026.200 62.300l12 -13" stroke="#979797" stroke-width="4.500"/><path d="M1031.200 67l12 -13" stroke="#979797" stroke-width="4.500"/>
<path d="M1064.800 49h4.800v14.500h7.400v4h-19.400v-4h7.200z" fill="#979797" stroke="#8a8a8a" stroke-width=".6" stroke-linejoin="round"/>
<path d="M1091 55c7 -.5 11.500 4 12.500 12" fill="none" stroke="#979797" stroke-width="3.600" stroke-linecap="round"/><path d="M1096.500 48.500l13 14.500" stroke="#979797" stroke-width="3.600"/>
<rect x="1126.300" y="50.200" width="14.500" height="6.200" rx="1.500" fill="#979797"/><rect x="1126.300" y="60.200" width="14.500" height="6.200" rx="1.500" fill="#979797"/>
<path d="M1157.500 50l8.500 6.500v4l-8.500 6.500v-4l5.500 -4.500 -5.500 -4.500zM1176 50l-8.500 6.500v4l8.500 6.500v-4l-5.500 -4.500 5.500 -4.500z" fill="#979797"/>
<path d="M1190.300 56l2.600 2.700 -2.600 2.700M1194 56l2.600 2.700 -2.600 2.700" fill="none" stroke="#111" stroke-width="1.500"/>
</svg>
<style>
#dock{left:1px;top:77px;width:393px;height:583px;background:#f2f1f0}
#pane{left:2px;top:127px;width:387px;height:532px;border:1px solid #bdb9b5;border-radius:0 4px 4px 0;background:#f2f1f0}
#taskbg{left:3px;top:128.3px;width:369px;height:529px;background:#cbc7c4}
.tab{position:absolute;border:1px solid #c1bdb9;border-bottom:none;border-radius:5px 5px 0 0}
.btn{position:absolute;height:22.5px;border:1px solid #bcb8b4;border-radius:4px;background:linear-gradient(#ffffff,#f6f5f4 50%,#ebeae8);text-align:center;line-height:20px;font-size:14.5px;color:#454545;box-shadow:0 1px 1px rgba(0,0,0,.08);letter-spacing:0}
.hdr{position:absolute;left:11px;width:353px;height:23px;background:linear-gradient(#f07746,#f0794a 40%,#f4906b);color:#fff;font-weight:bold;font-size:14px;letter-spacing:-0.55px}
.hdr .doc{position:absolute;left:6px;top:1.5px;width:17px;height:20px}
.hdr .ttl{position:absolute;left:28px;top:4px;line-height:15px;white-space:nowrap}
.hdr .fold{position:absolute;left:336px;top:5px;width:14px;height:14px}
.box{position:absolute;left:11px;width:353px;background:#f2f1f0}
.ser{font-family:"Liberation Serif","DejaVu Serif",serif;font-size:12px;color:#454545;letter-spacing:0}
.lbl{position:absolute;white-space:nowrap;font-size:14.5px;line-height:16px;color:#454545;letter-spacing:-0.35px}
.chk{position:absolute;width:13px;height:13px;border:1px solid #b3aeaa;border-radius:2.5px;background:linear-gradient(#fff,#f7f6f5)}
.chk.on{border-color:#c9633b;background:linear-gradient(#f58a5e,#ea6a3a)}
.vs{position:absolute;border:1px solid #c6c2be;border-radius:6px;background:linear-gradient(90deg,#d6d4d1,#dfdddb 50%,#e4e2e0)}
.sb{position:absolute;border:1px solid #c6c2be;background:linear-gradient(90deg,#f1f0ee,#f8f8f7 50%,#fcfcfc)}
.vth{position:absolute;border:1px solid #aca7a2;border-radius:6px;background:linear-gradient(90deg,#fdfdfd,#f2f1f0 50%,#e2e0de)}
.grip{position:absolute;width:5px;height:7px;background:repeating-linear-gradient(#a9a5a1 0,#a9a5a1 1px,transparent 1px,transparent 3px)}
#list{left:23px;top:469px;width:314px;height:177px;background:#fff;border:1px solid #c6c2be;overflow:hidden}
.li{position:absolute;left:31px;font-size:14.5px;line-height:16px;white-space:nowrap;color:#454545;letter-spacing:-0.2px}
.hb{position:absolute;left:4px;width:20px;height:4.6px;border-radius:1.5px;background:linear-gradient(#ee2a0c,#d82000);box-shadow:0 .5px 0 #9c3a20}
.vb{position:absolute;left:11.3px;width:4.7px;height:19.5px;border-radius:1.5px;background:linear-gradient(90deg,#ee2a0c,#d82000);box-shadow:.5px 0 0 #9c3a20}
</style>
<div id="dock" class="abs"></div>
<div class="t" style="left:3.30px;top:80.13px;font:normal 13.8px/15.87px 'Liberation Sans','DejaVu Sans',sans-serif;letter-spacing:-0.127px;color:#454545">Combo View</div>
<!-- dock buttons -->
<svg class="abs" style="left:360.2px;top:82.8px" width="26.600" height="11.400" viewBox="0 0 28 12">
 <rect x=".5" y=".5" width="10" height="10" rx="2" fill="#f6f5f4" stroke="#77746f"/>
 <rect x="4.5" y="2.5" width="4.5" height="3.5" rx="1" fill="none" stroke="#55524e"/>
 <rect x="2.5" y="4.5" width="4.500" height="3.500" rx="1" fill="#f6f5f4" stroke="#55524e"/>
 <rect x="16.5" y=".5" width="10" height="10" rx="2" fill="#f6f5f4" stroke="#77746f"/>
 <path d="M19 3l5 5M24 3l-5 5" stroke="#45423f" stroke-width="2" fill="none"/>
</svg>
<!-- tabs -->
<div class="tab" style="left:2px;top:102px;width:59px;height:25px;background:linear-gradient(#f4f3f2,#eeedeb 60%,#dddbd8)"></div>
<div class="t" style="left:8.30px;top:106.03px;font:normal 13.8px/15.87px 'Liberation Sans','DejaVu Sans',sans-serif;letter-spacing:0.178px;color:#454545">Project</div>
<div id="pane" class="abs"></div>
<div class="tab" style="left:60.3px;top:99px;width:46.5px;height:29px;background:linear-gradient(#fafafa,#f4f3f2)"></div>
<div class="t" style="left:67.50px;top:104.83px;font:normal 13.8px/15.87px 'Liberation Sans','DejaVu Sans',sans-serif;letter-spacing:-0.616px;color:#454545">Tasks</div>
<div id="taskbg" class="abs"></div>
<div class="btn" style="left:108.6px;top:146px;width:75.3px"></div><div class="t" style="left:131.70px;top:149.53px;font:normal 13.8px/15.87px 'Liberation Sans','DejaVu Sans',sans-serif;letter-spacing:-0.023px;color:#454545">Help</div>
<div class="btn" style="left:192.2px;top:146px;width:75.3px"></div><div class="t" style="left:213.30px;top:149.53px;font:normal 13.8px/15.87px 'Liberation Sans','DejaVu Sans',sans-serif;letter-spacing:-0.456px;color:#454545"><span style="text-decoration:underline">C</span>lose</div>

<!-- Solver messages -->
<div class="t" style="left:39.00px;top:189.53px;font:bold 13.8px/15.87px 'Liberation Sans','DejaVu Sans',sans-serif;letter-spacing:-0.450px;color:#ffffff">Solver messages</div><div class="hdr" style="top:185px"><svg class="doc" viewBox="0 0 17 20"><use href="#docico"/></svg><svg class="fold" viewBox="0 0 14 14"><use href="#foldico"/></svg></div>
<div class="box" style="top:208px;height:57px">
</div><div class="t" style="left:23.30px;top:221.08px;font:normal 11.7px/13.45px 'Liberation Serif','DejaVu Serif',serif;letter-spacing:0.151px;color:#454545">Under-constrained sketch with 3 degrees of freedom</div><div class="t" style="left:23.30px;top:240.58px;font:normal 11.7px/13.45px 'Liberation Serif','DejaVu Serif',serif;letter-spacing:0.040px;color:#454545">Solved in 0 sec</div>

<!-- Edit controls -->
<div class="t" style="left:39.00px;top:276.63px;font:bold 13.8px/15.87px 'Liberation Sans','DejaVu Sans',sans-serif;letter-spacing:-0.164px;color:#ffffff">Edit controls</div><div class="hdr" style="top:273px"><svg class="doc" viewBox="0 0 17 20"><use href="#docico"/></svg><svg class="fold" viewBox="0 0 14 14"><use href="#foldico"/></svg></div>
<div class="box" style="top:296px;height:100px"></div>
<div class="t" style="left:23.50px;top:312.83px;font:normal 13.8px/15.87px 'Liberation Sans','DejaVu Sans',sans-serif;letter-spacing:-0.348px;color:#454545">Grid size:</div>
<div class="combo" style="left:192px;top:308px;width:159px;height:23px"><svg class="arr" viewBox="0 0 7 12"><path d="M3.500 0.700L6.200 3.700H.8zM.8 8.800h5.400L3.500 11.600z" fill="#6e6e6e"/></svg></div>
<div class="t" style="left:197.00px;top:312.83px;font:normal 13.8px/15.87px 'Liberation Sans','DejaVu Sans',sans-serif;letter-spacing:-0.334px;color:#454545">10 mm</div><div class="t" style="left:196.70px;top:443.63px;font:normal 13.8px/15.87px 'Liberation Sans','DejaVu Sans',sans-serif;letter-spacing:0.089px;color:#454545">Normal</div><div class="chk" style="left:26px;top:341.6px"></div>
<div class="t" style="left:46.50px;top:340.63px;font:normal 13.8px/15.87px 'Liberation Sans','DejaVu Sans',sans-serif;letter-spacing:-0.336px;color:#454545">Grid snap</div>
<div class="chk on" style="left:26px;top:367.5px"></div>
<svg class="abs" style="left:26px;top:365.5px" width="16" height="16" viewBox="0 0 16 16"><path d="M2.800 8.800l3.200 3.400 8.300-9.400" fill="none" stroke="#6b3a25" stroke-width="2"/></svg>
<div class="t" style="left:46.50px;top:366.73px;font:normal 13.8px/15.87px 'Liberation Sans','DejaVu Sans',sans-serif;letter-spacing:0.110px;color:#454545">Auto constraints</div>

<!-- Constraints -->
<div class="t" style="left:39.00px;top:407.83px;font:bold 13.8px/15.87px 'Liberation Sans','DejaVu Sans',sans-serif;letter-spacing:-0.216px;color:#ffffff">Constraints</div><div class="hdr" style="top:404px"><svg class="doc" viewBox="0 0 17 20"><use href="#docico"/></svg><svg class="fold" viewBox="0 0 14 14"><use href="#foldico"/></svg></div>
<div class="box" style="top:427px;height:230px"></div>
<div class="t" style="left:23.50px;top:443.63px;font:normal 13.8px/15.87px 'Liberation Sans','DejaVu Sans',sans-serif;letter-spacing:0.114px;color:#454545">Filter:</div>
<div class="combo" style="left:192px;top:439px;width:159px;height:23px"><svg class="arr" viewBox="0 0 7 12"><path d="M3.500 0.700L6.200 3.700H.8zM.8 8.800h5.400L3.500 11.600z" fill="#6e6e6e"/></svg></div>
<div id="list" class="abs">
 <div class="hb" style="top:9.7px"></div>
 <div class="hb" style="top:33.6px"></div>
 <div class="vb" style="top:49.3px"></div>
 <div class="vb" style="top:73.2px"></div>
 <div class="hb" style="top:105.4px"></div>
 <div class="hb" style="top:129.4px"></div>
 <div class="vb" style="top:145px"></div>
 <div class="vb" style="top:168.9px"></div>
</div>
<div class="t" style="left:54.50px;top:475.03px;font:normal 13.8px/15.87px 'Liberation Sans','DejaVu Sans',sans-serif;letter-spacing:0.040px;color:#454545">Constraint5</div><div class="t" style="left:54.50px;top:498.96px;font:normal 13.8px/15.87px 'Liberation Sans','DejaVu Sans',sans-serif;letter-spacing:0.040px;color:#454545">Constraint6</div><div class="t" style="left:54.50px;top:522.89px;font:normal 13.8px/15.87px 'Liberation Sans','DejaVu Sans',sans-serif;letter-spacing:0.040px;color:#454545">Constraint7</div><div class="t" style="left:54.50px;top:546.82px;font:normal 13.8px/15.87px 'Liberation Sans','DejaVu Sans',sans-serif;letter-spacing:0.040px;color:#454545">Constraint8</div><div class="t" style="left:54.50px;top:570.75px;font:normal 13.8px/15.87px 'Liberation Sans','DejaVu Sans',sans-serif;letter-spacing:0.047px;color:#454545">Constraint13</div><div class="t" style="left:54.50px;top:594.68px;font:normal 13.8px/15.87px 'Liberation Sans','DejaVu Sans',sans-serif;letter-spacing:0.047px;color:#454545">Constraint14</div><div class="t" style="left:54.50px;top:618.61px;font:normal 13.8px/15.87px 'Liberation Sans','DejaVu Sans',sans-serif;letter-spacing:0.047px;color:#454545">Constraint15</div>
<!-- list scrollbar -->
<div class="vs" style="left:340px;top:469px;width:12px;height:177px"></div>
<div class="sb" style="left:340px;top:469px;width:12px;height:13px;border-radius:6px 6px 0 0;border-bottom:none"></div><div class="sb" style="left:340px;top:633px;width:12px;height:13px;border-radius:0 0 6px 6px;border-top:none"></div><div class="vth" style="left:340px;top:481px;width:12px;height:88px"></div>
<div class="grip" style="left:343.5px;top:521px"></div>
<svg class="abs" style="left:339.5px;top:469px" width="13" height="177" viewBox="0 0 13 177"><path d="M4.500 7.500h4L6.500 5z" fill="#b9b5b1"/><path d="M4 167h5.400l-2.700 3.400z" fill="#77746f"/></svg>
<!-- outer scrollbar -->
<div class="vs" style="left:375px;top:128px;width:13px;height:530px"></div>
<div class="sb" style="left:375px;top:128px;width:13px;height:13px;border-radius:6px 6px 0 0;border-bottom:none"></div><div class="sb" style="left:375px;top:645.5px;width:13px;height:12.5px;border-radius:0 0 6px 6px;border-top:none"></div><div class="vth" style="left:375px;top:140px;width:13px;height:498px"></div>
<div class="grip" style="left:379px;top:384px"></div>
<svg class="abs" style="left:375px;top:128px" width="13" height="530" viewBox="0 0 13 530"><path d="M4.500 7.500h4L6.500 5z" fill="#b9b5b1"/><path d="M3.800 521.500h5.400l-2.700 3.400z" fill="#77746f"/></svg>
<!-- splitter grip -->
<div class="grip" style="left:378px;top:386px;display:none"></div>
<svg width="0" height="0" style="position:absolute">
 <defs>
  <linearGradient id="docg" x1="0" y1="0" x2="1" y2="1"><stop offset="0" stop-color="#f4f4f4"/><stop offset="1" stop-color="#d8d8d8"/></linearGradient>
  <radialGradient id="starg"><stop offset="0" stop-color="#ffffa0"/><stop offset=".6" stop-color="#f5e53a"/><stop offset="1" stop-color="#f5e53a" stop-opacity="0"/></radialGradient>
  <g id="docico"><rect x=".5" y="3" width="14.500" height="16" rx="1" fill="url(#docg)" stroke="#8a8a88" stroke-width=".8"/><circle cx="13" cy="4.200" r="4" fill="url(#starg)"/></g>
  <g id="foldico"><circle cx="7" cy="7" r="6.500" fill="#fff"/><path d="M4 6.500l3-3 3 3M4 10.500l3-3 3 3" fill="none" stroke="#ef7a4c" stroke-width="1.600"/></g>
 </defs>
</svg>
<div class="abs" style="left:393.4px;top:75.3px;width:807px;height:555px;background:#fbfbfa"></div>
<div class="abs" style="left:394.4px;top:76.3px;width:806px;height:553.9px;background:linear-gradient(#2b2b5e 0,#333366 1.500px,#9999b3)"></div>
<svg class="abs" style="left:395px;top:77px" width="805" height="553" viewBox="395 77 805 553">
<defs>
<linearGradient id="bg" x1="0" y1="0" x2="0" y2="1"><stop offset="0" stop-color="#333366"/><stop offset="1" stop-color="#9999b3"/></linearGradient>
<linearGradient id="bevL" x1="0" y1="0" x2="1" y2="0"><stop offset="0" stop-color="#707070"/><stop offset=".1" stop-color="#969696"/><stop offset=".32" stop-color="#c4c4c4"/><stop offset=".6" stop-color="#d1d1d1"/><stop offset="1" stop-color="#d5d5d5"/></linearGradient>
<linearGradient id="bevR" x1="1" y1="0" x2="0" y2="0"><stop offset="0" stop-color="#747474"/><stop offset=".12" stop-color="#8e8e8e"/><stop offset=".4" stop-color="#bcbcbc"/><stop offset=".7" stop-color="#d0d0d0"/><stop offset="1" stop-color="#d5d5d5"/></linearGradient>
<linearGradient id="bevT" x1="0" y1="0" x2="0" y2="1"><stop offset="0" stop-color="#808080"/><stop offset=".2" stop-color="#a6a6a6"/><stop offset=".6" stop-color="#c6c6c6"/><stop offset="1" stop-color="#d4d4d4"/></linearGradient>
<linearGradient id="bevB" x1="0" y1="1" x2="0" y2="0"><stop offset="0" stop-color="#8e8e8e"/><stop offset=".15" stop-color="#b6b6b6"/><stop offset=".5" stop-color="#cfcfcf"/><stop offset="1" stop-color="#d5d5d5"/></linearGradient>
<radialGradient id="cTL" cx="1" cy="1" r="1"><stop offset="0" stop-color="#d6d6d6"/><stop offset=".55" stop-color="#c8c8c8"/><stop offset=".85" stop-color="#a6a6a6"/><stop offset="1" stop-color="#7a7a7a"/></radialGradient>
<radialGradient id="cTR" cx="0" cy="1" r="1"><stop offset="0" stop-color="#d6d6d6"/><stop offset=".55" stop-color="#c8c8c8"/><stop offset=".85" stop-color="#a6a6a6"/><stop offset="1" stop-color="#7a7a7a"/></radialGradient>
<radialGradient id="cBL" cx="1" cy="0" r="1"><stop offset="0" stop-color="#d8d8d8"/><stop offset=".6" stop-color="#cccccc"/><stop offset=".88" stop-color="#b4b4b4"/><stop offset="1" stop-color="#8a8a8a"/></radialGradient>
<radialGradient id="cBR" cx="0" cy="0" r="1"><stop offset="0" stop-color="#d8d8d8"/><stop offset=".6" stop-color="#cccccc"/><stop offset=".88" stop-color="#b4b4b4"/><stop offset="1" stop-color="#8a8a8a"/></radialGradient>
</defs>
<rect x="395" y="77" width="805" height="553" fill="url(#bg)"/>
<rect x="660" y="116" width="278" height="479" fill="#d4d4d4" stroke="#111" stroke-width="1.6"/>
<path d="M692 167 A23 23 0 0 1 715 144.5 H879.5 A23 23 0 0 1 902.5 167 V548 A22.5 22.5 0 0 1 880.0 570.5 H714.5 A22.5 22.5 0 0 1 692 548 Z" fill="#d5d5d5"/>
<rect x="692" y="168" width="28" height="337" fill="url(#bevL)"/>
<rect x="875" y="168" width="27.5" height="337" fill="url(#bevR)"/>
<path d="M692 168 A23 23 0 0 1 715 144.5 H720 V168Z" fill="url(#cTL)"/>
<path d="M902.5 168 A23 23 0 0 0 879.5 144.5 H875 V168Z" fill="url(#cTR)"/>
<path d="M692 505 V548 A22.5 22.5 0 0 0 714.5 570.5 H720 V505Z" fill="url(#cBL)"/>
<path d="M902.5 505 V548 A22.5 22.5 0 0 1 880.0 570.5 H875 V505Z" fill="url(#cBR)"/>
<path d="M692 505 H717 V514.5 L692 544Z" fill="url(#bevL)"/>
<path d="M902.5 505 H877 V514.5 L902.5 544Z" fill="url(#bevR)"/>
<rect x="730" y="144.5" width="135" height="23" fill="url(#bevT)"/>
<path d="M730 144.5 h135 v6 l-25 10 l-20 -9 l-50 2 l-40 -4z" fill="#a2a2a2" opacity=".35"/>
<path d="M797.500 144.5 h67 v5 l-34 3 l-33 6z" fill="#8f8f8f" opacity=".55"/>
<path d="M760 144.5 h22 l-3 3.500 h-15z" fill="#2a2a2a"/>
<path d="M738 145.5 h12 l-6 7z" fill="#7d7d7d" stroke="#333" stroke-width=".8"/>
<rect x="720" y="519" width="155" height="51" fill="url(#bevB)" opacity=".9"/>
<g fill="none" stroke="#141414" stroke-width="1.5" stroke-linejoin="round">
<path d="M692 167 A23 23 0 0 1 715 144.5 H879.5 A23 23 0 0 1 902.5 167 V548 A22.5 22.5 0 0 1 880.0 570.5 H714.5 A22.5 22.5 0 0 1 692 548 Z" stroke-width="2.400"/>
<path d="M720 144.5V570.5M875 144.5V570.5"/>
<path d="M720 167.500H825M838 167.500H875" stroke-width="1.300"/>
<path d="M730 144.5V184 A10 10 0 0 0 740 194 H855 A10 10 0 0 0 864.500 184 V144.5" stroke-width="1.800"/>
<path d="M797.500 144.5V167"/>
<path d="M692 168.500 L714 169.500 L720 171 M692 174.800H720" stroke-width="1.500"/>
<path d="M902.5 168.500 L881 169.500 L875 171 M902.5 174.800H875" stroke-width="1.500"/>
<path d="M720 519H875M797 519V570.5"/>
<path d="M692 505H717V514.500L692 544" stroke-width="1.300"/>
<path d="M902.5 505H877V514.500L900 541" stroke-width="1.300"/>
<path d="M875 559.500h4.500v4l-2 2.500h-2.500" stroke-width="1" fill="#d6d6d6"/>
<rect x="899.500" y="515" width="2.500" height="28" fill="#8f8f8f" stroke-width="1"/>
<path d="M710 570.5H884.5" stroke-width="2.600"/>
</g>
<path d="M830.800 167 A16.200 16.200 0 0 1 862.800 167" fill="none" stroke="#1a1a1a" stroke-width="1"/>
<path d="M833.900 168.500 A13.400 13.400 0 1 1 859.700 168.500" fill="none" stroke="#151515" stroke-width="3"/>
<circle cx="846.800" cy="165" r="10.900" fill="#d8d8d8" stroke="#151515" stroke-width="1.300"/>
<circle cx="825" cy="164.500" r="4.700" fill="#d6d6d6" stroke="#151515" stroke-width="1.400"/>
<circle cx="825.700" cy="177.700" r="1.500" fill="#151515"/>
<path d="M408.7 275.300V430.800M435.5 275.300V430.800M461.3 275.300V430.800M487.2 275.300V430.800M513.0 275.300V430.800M538.8 275.300V430.800M564.6 275.300V430.800M590.4 275.300V430.800M616.3 275.300V430.800M642.1 275.300V430.800M667.9 275.300V430.800M693.7 275.300V430.800M719.5 275.300V430.800M745.4 275.300V430.800M771.2 275.300V430.800M797.0 275.300V430.800M822.8 275.300V430.800M848.6 275.300V430.800M874.5 275.300V430.800M900.3 275.300V430.800M926.1 275.300V430.800M951.9 275.300V430.800M977.7 275.300V430.800M1003.6 275.300V430.800M1029.4 275.300V430.800M1055.2 275.300V430.800M1081.0 275.300V430.800M1106.8 275.300V430.800M1132.7 275.300V430.800M1158.5 275.300V430.800" fill="none" stroke="#b8b8b8" stroke-width="1" stroke-dasharray="4.300 3"/>
<path d="M408.500 301.6H1185M408.500 327.4H1185M408.500 379.1H1185M408.500 404.9H1185M408.500 430.8H1185" fill="none" stroke="#b8b8b8" stroke-width="1" stroke-dasharray="4.600 2.900"/>
<path d="M412.500 353H1182" stroke="#d45e5e" stroke-width="1.600" fill="none"/>
<path d="M797 301V405" stroke="#62c862" stroke-width="1.500" fill="none"/>
<path d="M797 218.500V301" stroke="#1e8a2a" stroke-width="2" fill="none"/>
<path d="M796.200 218.300h1.600v5.500h.9l.4 5.200h.7l.6 6l1.400 .6v.4h-9.600v-.4l1.400 -.6l.6 -6h.7l.4 -5.200h.9z" fill="#1e7f28"/>
<g fill="none" stroke="#fff" stroke-width="3" stroke-linecap="butt">
<path d="M718.400 327.400H648.300V379H718.400"/>
<path d="M876 327.400H946V379H876"/>
<path d="M718.400 327.400V379" stroke-width="2.200"/><path d="M876 327.400V379" stroke-width="2.200"/>
</g>
<g fill="#ff2000" stroke="none">
<rect x="676.4" y="312" width="13.200" height="4"/>
<rect x="904" y="312" width="13.200" height="4"/>
<rect x="676.4" y="391.5" width="13.200" height="4"/>
<rect x="904" y="391.5" width="13.200" height="4"/>
<rect x="632.3" y="347.200" width="2.800" height="13"/>
<rect x="730.2" y="347.200" width="2.800" height="13"/>
<rect x="860" y="347.200" width="2.800" height="13"/>
<rect x="957.4" y="347.200" width="2.800" height="13"/>
<circle cx="648.3" cy="327.4" r="3.100"/>
<circle cx="718.4" cy="327.4" r="3.100"/>
<circle cx="648.3" cy="379" r="3.100"/>
<circle cx="718.4" cy="379" r="3.100"/>
<circle cx="876" cy="327.4" r="3.100"/>
<circle cx="946" cy="327.4" r="3.100"/>
<circle cx="876" cy="379" r="3.100"/>
<circle cx="946" cy="379" r="3.100"/>
</g>
<g fill="none" stroke="#ff2000" stroke-width="1.700">
<path d="M648.3 327.4L660.8 327.4M657.6 330.6L660.8 327.4L657.6 324.2M718.4 327.4L730.9 327.4M727.7 330.6L730.9 327.4L727.7 324.2M718.4 327.4L718.4 339.9M715.2 336.7L718.4 339.9L721.6 336.7M718.4 379L718.4 366.5M721.6 369.7L718.4 366.5L715.2 369.7M876 327.4L863.5 327.4M866.7 324.2L863.5 327.4L866.7 330.6M946 327.4L933.5 327.4M936.7 324.2L933.5 327.4L936.7 330.6M876 327.4L876.0 339.9M872.8 336.7L876.0 339.9L879.2 336.7M876 379L876.0 366.5M879.2 369.7L876.0 366.5L872.8 369.7"/>
<path d="M711.9 348.1L716.1 353.6L711.9 359.1M724.9 348.1L720.6999999999999 353.6L724.9 359.1M869.5 348.1L873.7 353.6L869.5 359.1M882.5 348.1L878.3 353.6L882.5 359.1M790.5 322.5L794.7 328L790.5 333.5M803.5 322.5L799.3 328L803.5 333.5" stroke-width="2.500"/>
</g>
<circle cx="797" cy="353" r="3" fill="#14142a"/>
<path d="M1172.200 602.300V583" stroke="#1f9a1f" stroke-width="2" fill="none"/><ellipse cx="1172.200" cy="588" rx="2" ry="2.500" fill="#1f9a1f"/>
<path d="M1172.200 602.300H1192" stroke="#a51f1f" stroke-width="1.500" fill="none"/><ellipse cx="1186.700" cy="602.300" rx="2.500" ry="1.800" fill="#a51f1f"/>
<path d="M1172.200 599.300l3 3 -3 3 -3 -3z" fill="#1f1f9f"/>
<g font-family="'Liberation Sans',sans-serif" font-size="9" fill="#111" text-anchor="middle"><text x="1177.600" y="584">Y</text><text x="1177.600" y="602.500">Z</text><text x="1195.700" y="602.500">X</text></g>
</svg>
<style>
#tabbar{left:395px;top:630px;width:805px;height:30px;background:#f2f1f0}
#statline{left:390px;top:659.8px;width:810px;height:1px;background:#d6d3d0}
#status{left:0;top:660px;width:1200px;height:28px;background:#f2f1f0}
.btab{position:absolute;border:1px solid #c9c5c1;border-top:none;border-radius:0 0 5px 5px}
</style>
<div id="tabbar" class="abs"></div>
<div id="status" class="abs"></div>
<div id="statline" class="abs"></div>
<div class="abs" style="left:2px;top:657.3px;width:388px;height:3.4px;background:linear-gradient(#d2d0cd,#cecbc8 40%,#e9e8e6)"></div>
<div class="btab" style="left:395px;top:630px;width:102px;height:27px;background:linear-gradient(#dcdad8,#eceae8 45%,#f1f0ee)"></div>
<div class="btab" style="left:497px;top:630px;width:275px;height:30px;background:linear-gradient(#f5f5f4,#ffffff);border-color:#cfcbc7"></div>
<div class="t" style="left:402.20px;top:637.13px;font:normal 13.8px/15.87px 'Liberation Sans','DejaVu Sans',sans-serif;letter-spacing:-0.057px;color:#454545">Start page</div>
<svg class="abs" style="left:473px;top:639px" width="13" height="13" viewBox="0 0 13 13"><path d="M2 2l9 9M11 2l-9 9" stroke="#5b5854" stroke-width="3.200" fill="none"/></svg>
<svg class="abs" style="left:502px;top:637px" width="16" height="16" viewBox="0 0 16 16">
 <path d="M1 1h7v2.500H4V6h3v2H4v4H1z" fill="#e2331a"/>
 <circle cx="9.500" cy="9.500" r="3.400" fill="none" stroke="#1c3a9a" stroke-width="2.200" stroke-dasharray="1.900 0.780"/>
 <circle cx="9.500" cy="9.500" r="2.800" fill="none" stroke="#1c3a9a" stroke-width="1.600"/>
</svg>
<div class="t" style="left:524.00px;top:638.03px;font:normal 13.8px/15.87px 'Liberation Sans','DejaVu Sans',sans-serif;letter-spacing:-0.164px;color:#454545">T39-aquaris-5-7-cama-progreso : 1*</div>
<svg class="abs" style="left:748px;top:639px" width="13" height="13" viewBox="0 0 13 13"><path d="M2 2l9 9M11 2l-9 9" stroke="#5b5854" stroke-width="3.200" fill="none"/></svg>
<div class="t" style="left:7.00px;top:666.63px;font:normal 13.8px/15.87px 'Liberation Sans','DejaVu Sans',sans-serif;letter-spacing:-0.213px;color:#454545">Preselected: T39_aquaris_5_7_cama_progreso.Sketch001.Edge2 (-54.150139,-9.846354,7.003000)</div>
<div class="t" style="left:1077.00px;top:667.93px;font:normal 13.8px/15.87px 'Liberation Sans','DejaVu Sans',sans-serif;letter-spacing:-0.124px;color:#454545">311.36 x 214.11 mm</div>
</body>
</html>
